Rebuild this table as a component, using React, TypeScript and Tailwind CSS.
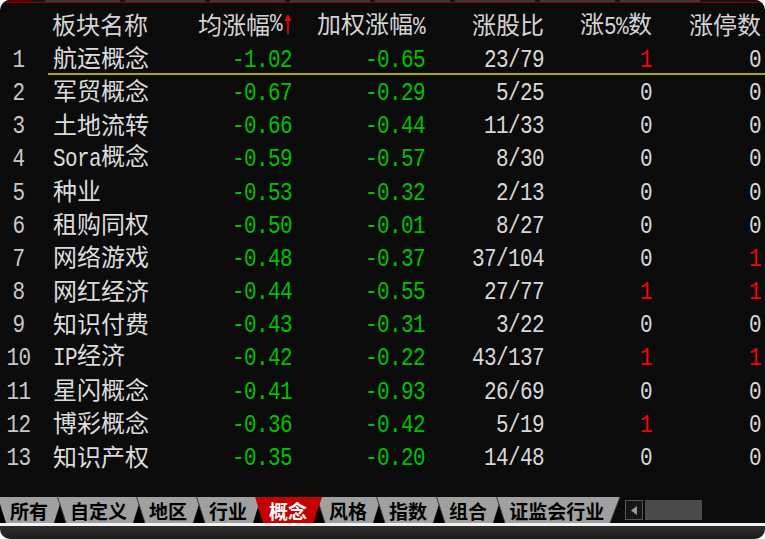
import React from "react";

const rows: [number, string, string, string, string, string, string][] = [
  [1, "航运概念", "-1.02", "-0.65", "23/79", "1", "0"],
  [2, "军贸概念", "-0.67", "-0.29", "5/25", "0", "0"],
  [3, "土地流转", "-0.66", "-0.44", "11/33", "0", "0"],
  [4, "Sora概念", "-0.59", "-0.57", "8/30", "0", "0"],
  [5, "种业", "-0.53", "-0.32", "2/13", "0", "0"],
  [6, "租购同权", "-0.50", "-0.01", "8/27", "0", "0"],
  [7, "网络游戏", "-0.48", "-0.37", "37/104", "0", "1"],
  [8, "网红经济", "-0.44", "-0.55", "27/77", "1", "1"],
  [9, "知识付费", "-0.43", "-0.31", "3/22", "0", "0"],
  [10, "IP经济", "-0.42", "-0.22", "43/137", "1", "1"],
  [11, "星闪概念", "-0.41", "-0.93", "26/69", "0", "0"],
  [12, "博彩概念", "-0.36", "-0.42", "5/19", "1", "0"],
  [13, "知识产权", "-0.35", "-0.20", "14/48", "0", "0"],
];

const tabs = ["所有", "自定义", "地区", "行业", "概念", "风格", "指数", "组合", "证监会行业"];

// half width latin/digits, stretched a bit to look like the bitmap font
const mono =
  "inline-block scale-y-[1.25] [font-family:'Liberation_Mono',monospace] text-[21px] tracking-[-0.6px]";
const cjk = "[font-family:'Noto_Sans_CJK_SC',sans-serif]";

// split latin runs (half width) from chinese runs (full width)
function Txt({ s }: { s: string }) {
  const parts = s.match(/[\x00-\x7f]+|[^\x00-\x7f]+/g) || [];
  return (
    <>
      {parts.map((p, i) =>
        /^[\x00-\x7f]/.test(p) ? (
          <span key={i} className={mono}>{p}</span>
        ) : (
          <span key={i}>{p}</span>
        )
      )}
    </>
  );
}

function Sep() {
  return (
    <svg width="16" height="26" className="shrink-0 bg-[#a0a0a0]">
      <polygon points="3,26 9,7 15,26" fill="#000" />
      <line x1="6.5" y1="0" x2="15" y2="26" stroke="#3a3a3a" strokeWidth="1" />
    </svg>
  );
}

function UpArrow() {
  return (
    <svg width="8" height="20" className="ml-[2px] inline-block">
      <line x1="4" y1="4" x2="4" y2="20" stroke="#ff0000" strokeWidth="1.5" />
      <polygon points="0.5,7 4,0 7.5,7" fill="#ff0000" />
    </svg>
  );
}

const numColor = (v: string) => (v === "1" ? "text-[#ff0000]" : "text-[#d8d8d8]");

export default function App() {
  return (
    <div className="h-[539px] w-[765px] bg-white">
      <div className={`flex h-[523px] flex-col overflow-hidden rounded-t-[10px] bg-[#0b0b0b] ${cjk}`}>
        {/* strip of the window above */}
        <div className="flex h-[2px] bg-[#141414]">
          <div className="ml-[10px] w-[20px] bg-[#5a0000]" />
          <div className="ml-[15px] w-[75px] bg-[#3a3a3a]" />
          <div className="ml-[5px] w-[80px] bg-[#3a3a3a]" />
          <div className="ml-[5px] w-[75px] bg-[#3a3a3a]" />
          <div className="ml-[5px] w-[80px] bg-[#3a3a3a]" />
          <div className="ml-[5px] w-[75px] bg-[#3a3a3a]" />
          <div className="ml-[5px] w-[80px] bg-[#3a3a3a]" />
          <div className="ml-[5px] w-[75px] bg-[#3a3a3a]" />
          <div className="ml-[5px] w-[80px] bg-[#3a3a3a]" />
        </div>
        <div className="h-[1px] bg-[#8a0000]" />

        <div className="flex-1 pt-[5.5px] text-[24px] leading-none">
          {/* header */}
          <div className="flex h-[33.2px] items-center text-[#d4d4d4]">
            <div className="w-[37px]" />
            <div className="ml-[11px] flex h-full flex-1 items-center border-b-2 border-transparent">
              <div className="w-[142px] pl-[4px]">板块名称</div>
              <div className="flex w-[102px] items-center justify-end">
                均涨幅<span className={mono}>%</span>
                <UpArrow />
              </div>
              <div className="w-[133px] text-right">
                加权涨幅<span className={mono}>%</span>
              </div>
              <div className="w-[119px] text-right">涨股比</div>
              <div className="w-[108px] text-right">
                涨<span className={mono}>5%</span>数
              </div>
              <div className="w-[109px] text-right">涨停数</div>
            </div>
          </div>

          {rows.map((r) => (
            <div key={r[0]} className="flex h-[33.2px] items-center">
              <div className="w-[37px] pb-[2px] text-center text-[#c8c8c8]">
                <span className={mono}>{r[0]}</span>
              </div>
              <div
                className={`ml-[11px] flex h-full flex-1 items-center border-b-2 ${
                  r[0] === 1 ? "border-[#a8a800]" : "border-transparent"
                }`}
              >
                <div className="w-[142px] pl-[5px] text-[#dcdcdc]">
                  <Txt s={r[1]} />
                </div>
                <div className="w-[102px] text-right text-[#00c000]">
                  <span className={mono}>{r[2]}</span>
                </div>
                <div className="w-[133px] text-right text-[#00c000]">
                  <span className={mono}>{r[3]}</span>
                </div>
                <div className="w-[119px] text-right text-[#d8d8d8]">
                  <span className={mono}>{r[4]}</span>
                </div>
                <div className={`w-[108px] text-right ${numColor(r[5])}`}>
                  <span className={mono}>{r[5]}</span>
                </div>
                <div className={`w-[109px] text-right ${numColor(r[6])}`}>
                  <span className={mono}>{r[6]}</span>
                </div>
              </div>
            </div>
          ))}
        </div>

        {/* sheet tabs */}
        <div className="flex h-[26px] shrink-0 items-stretch text-[19px] font-bold leading-none">
          <svg width="7" height="26" className="shrink-0 bg-[#a0a0a0]">
            <polygon points="0,7 6,26 0,26" fill="#000" />
          </svg>
          {tabs.map((t, i) => (
            <React.Fragment key={t}>
              {i > 0 && <Sep />}
              {i === 4 ? (
                <div className="relative flex items-center bg-[#a0a0a0] px-[3px] text-white">
                  <span className="absolute top-0 bottom-0 left-[-11px] right-[-12px] bg-[#c40000] [clip-path:polygon(0_0,100%_0,calc(100%_-_9px)_100%,8px_100%)]" />
                  <span className="relative">{t}</span>
                </div>
              ) : (
                <div className="flex items-center bg-[#a0a0a0] px-[3px] text-black">{t}</div>
              )}
            </React.Fragment>
          ))}
          <svg width="16" height="26" className="shrink-0">
            <polygon points="0,0 13,0 3,26 0,26" fill="#a0a0a0" />
            <line x1="13" y1="0" x2="3" y2="26" stroke="#3a3a3a" strokeWidth="1" />
          </svg>
          <div className="ml-[2px] mt-[3px] flex h-[20px] w-[18px] items-center justify-center border border-[#555] bg-[#161616]">
            <svg width="6" height="9">
              <polygon points="6,0 0,4.5 6,9" fill="#9a9a9a" />
            </svg>
          </div>
          <div className="ml-[2px] mt-[3px] h-[20px] w-[57px] bg-[#4a4a4a]" />
        </div>
      </div>
      <div className="h-[3px] bg-[#f2f2f2]" />
      <div className="h-[13px] rounded-b-[10px] bg-gradient-to-b from-[#2e2e2e] to-[#1c1c1c]" />
    </div>
  );
}
